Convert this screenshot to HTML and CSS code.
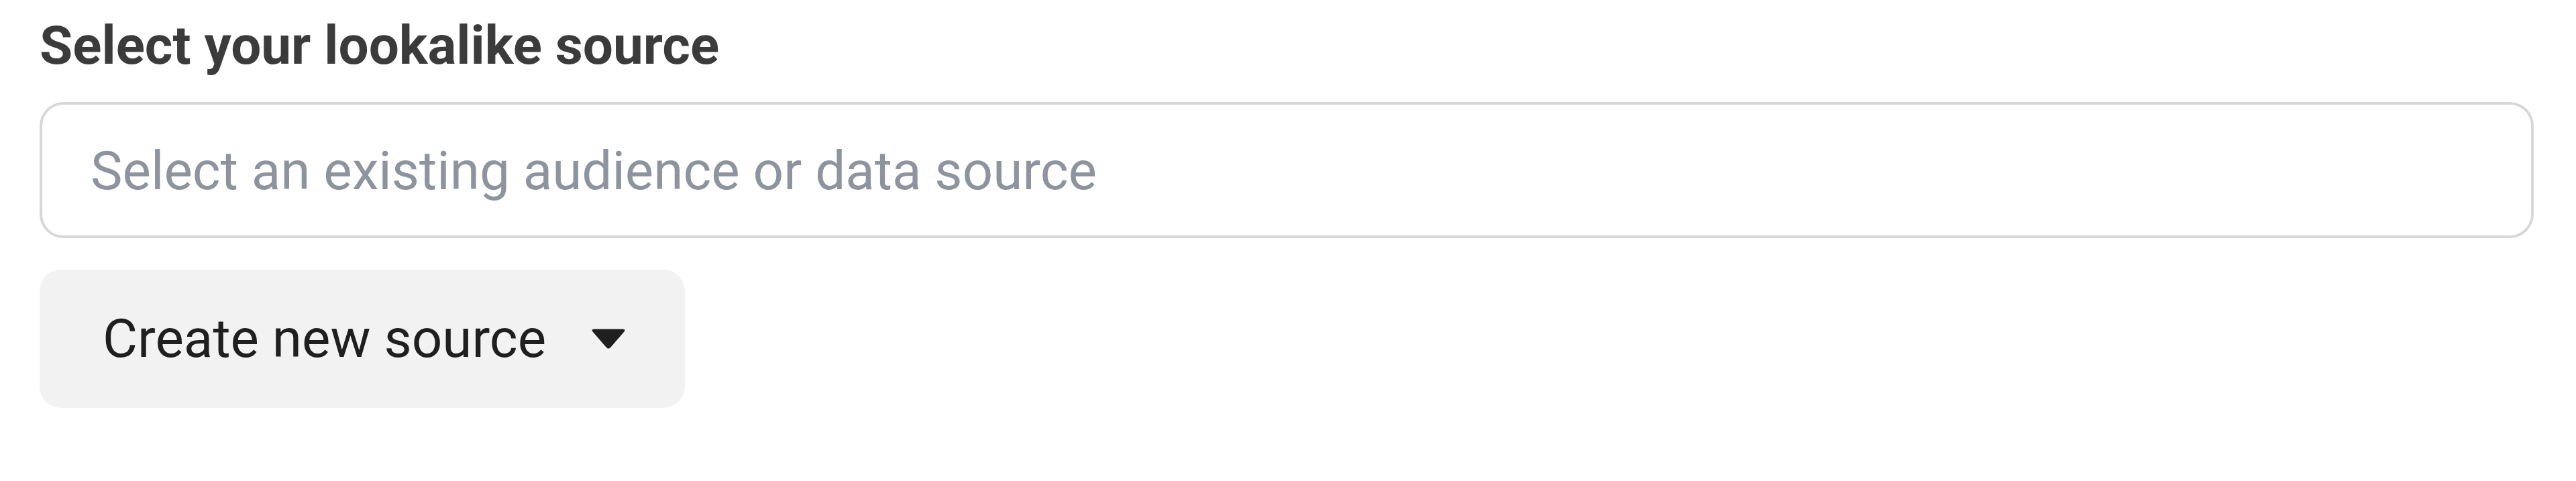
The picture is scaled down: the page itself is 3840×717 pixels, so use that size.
FILE: index.html
```html
<!DOCTYPE html>
<html lang="en">
<head>
<meta charset="utf-8">
<title>Lookalike source</title>
<link rel="stylesheet" href="styles.css">
</head>
<body>
<div class="wrap">
  <h2 class="title">Select your lookalike source</h2>
  <div class="field">
    <span class="placeholder">Select an existing audience or data source</span>
  </div>
  <button class="create" type="button">
    <span class="create-label">Create new source</span>
    <svg class="caret" width="52" height="32" viewBox="0 0 52 32" aria-hidden="true">
      <path d="M5 1.5 H47 Q52.5 1.5 49 6 L29 29 Q26 32 23 29 L3 6 Q-0.5 1.5 5 1.5 Z" fill="#1f1f1f"/>
    </svg>
  </button>
</div>
</body>
</html>
```

FILE: styles.css
```css
html, body {
  margin: 0;
  padding: 0;
  background: #ffffff;
}

body {
  font-family: Roboto, "Liberation Sans", Arial, sans-serif;
}

.wrap {
  padding: 18px 63px 0 59px;
  display: flex;
  flex-direction: column;
  align-items: flex-start;
}

.title {
  margin: 0;
  font-size: 80px;
  line-height: 100px;
  font-weight: 700;
  color: #3b3b3b;
  white-space: nowrap;
}

.field {
  margin-top: 34px;
  align-self: stretch;
  box-sizing: border-box;
  height: 203px;
  border: 4px solid #d7d7d7;
  border-radius: 36px;
  padding-left: 72px;
  padding-top: 2px;
  display: flex;
  align-items: center;
  background: #ffffff;
}

.placeholder {
  font-size: 80px;
  color: #8d949e;
  white-space: nowrap;
}

.create {
  margin-top: 47px;
  height: 206px;
  box-sizing: border-box;
  padding: 0 88px 0 94px;
  border: none;
  border-radius: 32px;
  background: #f2f2f2;
  display: flex;
  align-items: center;
  gap: 67px;
  font-family: inherit;
  cursor: pointer;
}

.create-label {
  font-size: 80px;
  color: #1f1f1f;
  white-space: nowrap;
}

.caret {
  display: block;
  flex: none;
}
```
